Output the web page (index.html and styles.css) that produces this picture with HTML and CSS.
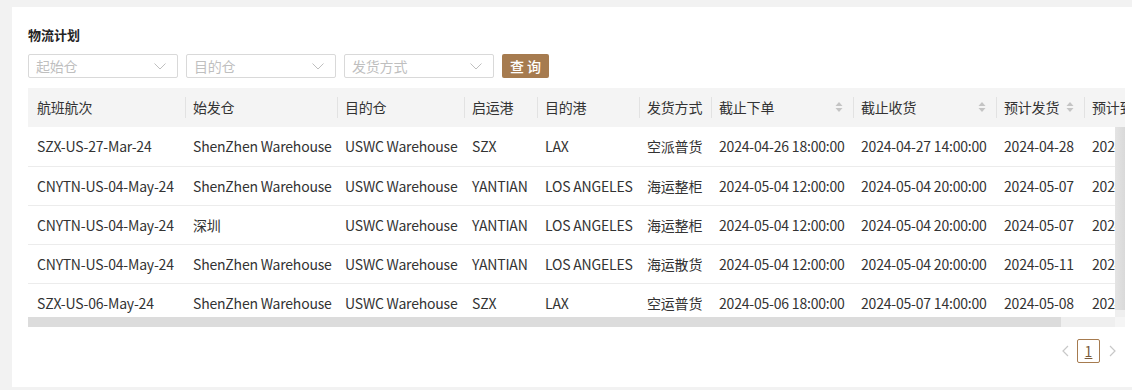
FILE: index.html
```html
<!DOCTYPE html>
<html lang="zh-CN">
<head>
<meta charset="utf-8">
<title>物流计划</title>
<link rel="stylesheet" href="styles.css">
</head>
<body>
<div class="card">
  <h2 class="title">物流计划</h2>
  <div class="filters">
    <div class="select"><span class="ph">起始仓</span><svg class="chev" viewBox="0 0 12 7" width="12" height="7"><path d="M0.5 0.5 L6 6 L11.5 0.5" fill="none" stroke="#bfbfbf" stroke-width="1"/></svg></div>
    <div class="select"><span class="ph">目的仓</span><svg class="chev" viewBox="0 0 12 7" width="12" height="7"><path d="M0.5 0.5 L6 6 L11.5 0.5" fill="none" stroke="#bfbfbf" stroke-width="1"/></svg></div>
    <div class="select"><span class="ph">发货方式</span><svg class="chev" viewBox="0 0 12 7" width="12" height="7"><path d="M0.5 0.5 L6 6 L11.5 0.5" fill="none" stroke="#bfbfbf" stroke-width="1"/></svg></div>
    <button class="btn">查 询</button>
  </div>

  <div class="table">
    <div class="thead-wrap">
      <table class="grid">
        <colgroup><col class="c1"><col class="c2"><col class="c3"><col class="c4"><col class="c5"><col class="c6"><col class="c7"><col class="c8"><col class="c9"><col class="c10"></colgroup>
        <thead>
          <tr>
            <th>航班航次</th>
            <th>始发仓</th>
            <th>目的仓</th>
            <th>启运港</th>
            <th>目的港</th>
            <th>发货方式</th>
            <th><div class="sortable"><span>截止下单</span><svg class="sort" viewBox="0 0 8 12" width="8" height="12"><path d="M4 1 L7.5 5 L0.5 5 Z M4 11 L7.5 7 L0.5 7 Z" fill="#c4c4c4"/></svg></div></th>
            <th><div class="sortable"><span>截止收货</span><svg class="sort" viewBox="0 0 8 12" width="8" height="12"><path d="M4 1 L7.5 5 L0.5 5 Z M4 11 L7.5 7 L0.5 7 Z" fill="#c4c4c4"/></svg></div></th>
            <th><div class="sortable"><span>预计发货</span><svg class="sort" viewBox="0 0 8 12" width="8" height="12"><path d="M4 1 L7.5 5 L0.5 5 Z M4 11 L7.5 7 L0.5 7 Z" fill="#c4c4c4"/></svg></div></th>
            <th><div class="sortable"><span>预计到货</span><svg class="sort" viewBox="0 0 8 12" width="8" height="12"><path d="M4 1 L7.5 5 L0.5 5 Z M4 11 L7.5 7 L0.5 7 Z" fill="#c4c4c4"/></svg></div></th>
          </tr>
        </thead>
      </table>
    </div>
    <div class="body-row">
      <div class="tbody-wrap">
        <table class="grid">
          <colgroup><col class="c1"><col class="c2"><col class="c3"><col class="c4"><col class="c5"><col class="c6"><col class="c7"><col class="c8"><col class="c9"><col class="c10"></colgroup>
          <tbody>
            <tr><td>SZX-US-27-Mar-24</td><td>ShenZhen Warehouse</td><td>USWC Warehouse</td><td>SZX</td><td>LAX</td><td>空派普货</td><td>2024-04-26 18:00:00</td><td>2024-04-27 14:00:00</td><td>2024-04-28</td><td>2024-05-06</td></tr>
            <tr><td>CNYTN-US-04-May-24</td><td>ShenZhen Warehouse</td><td>USWC Warehouse</td><td>YANTIAN</td><td>LOS ANGELES</td><td>海运整柜</td><td>2024-05-04 12:00:00</td><td>2024-05-04 20:00:00</td><td>2024-05-07</td><td>2024-05-25</td></tr>
            <tr><td>CNYTN-US-04-May-24</td><td>深圳</td><td>USWC Warehouse</td><td>YANTIAN</td><td>LOS ANGELES</td><td>海运整柜</td><td>2024-05-04 12:00:00</td><td>2024-05-04 20:00:00</td><td>2024-05-07</td><td>2024-05-25</td></tr>
            <tr><td>CNYTN-US-04-May-24</td><td>ShenZhen Warehouse</td><td>USWC Warehouse</td><td>YANTIAN</td><td>LOS ANGELES</td><td>海运散货</td><td>2024-05-04 12:00:00</td><td>2024-05-04 20:00:00</td><td>2024-05-11</td><td>2024-05-29</td></tr>
            <tr><td>SZX-US-06-May-24</td><td>ShenZhen Warehouse</td><td>USWC Warehouse</td><td>SZX</td><td>LAX</td><td>空运普货</td><td>2024-05-06 18:00:00</td><td>2024-05-07 14:00:00</td><td>2024-05-08</td><td>2024-05-16</td></tr>
          </tbody>
        </table>
      </div>
      <div class="vbar"><div class="vthumb"></div></div>
    </div>
    <div class="hbar-row">
      <div class="hbar"><div class="hthumb"></div></div>
      <div class="corner"></div>
    </div>
  </div>

  <div class="pager">
    <span class="pg-arrow"><svg viewBox="0 0 7 12" width="7" height="12"><path d="M6 1 L1 6 L6 11" fill="none" stroke="#c8c8c8" stroke-width="1.2"/></svg></span>
    <span class="pg-item">1</span>
    <span class="pg-arrow"><svg viewBox="0 0 7 12" width="7" height="12"><path d="M1 1 L6 6 L1 11" fill="none" stroke="#c8c8c8" stroke-width="1.2"/></svg></span>
  </div>
</div>
</body>
</html>
```
FILE: styles.css
```css
html, body {
  margin: 0;
  padding: 0;
  overflow: hidden;
}
body {
  background: #f2f2f2;
  font-family: "Noto Sans CJK SC", "Noto Sans", sans-serif;
  font-size: 14px;
  color: #333;
  height: 390px;
}
.card {
  background: #fff;
  margin: 7px 0 0 12px;
  width: 1097px;
  padding: 20px 16px 24px;
}
.title {
  margin: 0;
  font-size: 13px;
  line-height: 16px;
  font-weight: bold;
  color: #222;
}
.filters {
  margin-top: 11px;
  display: flex;
  gap: 8px;
  height: 24px;
}
.select {
  box-sizing: border-box;
  width: 150px;
  height: 24px;
  border: 1px solid #d9d9d9;
  border-radius: 2px;
  display: flex;
  align-items: center;
  justify-content: space-between;
  padding: 0 11px 0 7px;
}
.ph {
  color: #bfbfbf;
  font-size: 14px;
  line-height: 22px;
  letter-spacing: -0.2px;
}
.chev {
  display: block;
}
.btn {
  width: 47px;
  height: 24px;
  border: none;
  border-radius: 2px;
  background: #a67b4f;
  color: #fff;
  font-family: inherit;
  font-size: 14px;
  font-weight: 500;
  padding: 0;
  line-height: 24px;
}
.table {
  margin-top: 10px;
  width: 1097px;
}
.thead-wrap {
  overflow: hidden;
  width: 1097px;
  height: 39px;
  background: #f4f4f4;
}
.body-row {
  display: flex;
  height: 190px;
}
.tbody-wrap {
  width: 1087px;
  height: 190px;
  overflow: hidden;
}
.vbar {
  width: 10px;
  height: 190px;
  background: #efefef;
}
.vthumb {
  width: 10px;
  height: 183px;
  background: linear-gradient(to right, #e4e4e4, #d9d9d9);
}
.hbar-row {
  display: flex;
  height: 10px;
}
.hbar {
  width: 1087px;
  height: 10px;
  background: #efefef;
}
.hthumb {
  width: 1033px;
  height: 10px;
  background: #dcdcdc;
}
.corner {
  width: 10px;
  height: 10px;
  background: #f5f5f5;
}
.grid {
  table-layout: fixed;
  border-collapse: collapse;
  width: 1144px;
  letter-spacing: -0.2px;
}
.c1 { width: 157px; }
.c2 { width: 152px; }
.c3 { width: 127px; }
.c4 { width: 73px; }
.c5 { width: 102px; }
.c6 { width: 72px; }
.c7 { width: 142px; }
.c8 { width: 143px; }
.c9 { width: 88px; }
.c10 { width: 88px; }
.grid th {
  position: relative;
  height: 39px;
  box-sizing: border-box;
  padding: 0 8px;
  text-align: left;
  font-weight: normal;
  background: #f4f4f4;
  border-bottom: 1px solid #e8e8e8;
  white-space: nowrap;
  overflow: hidden;
  color: #333;
}
.grid th:first-child {
  padding-left: 9px;
}
.grid th + th::before {
  content: "";
  position: absolute;
  left: 0;
  top: 9px;
  width: 1px;
  height: 21px;
  background: #e2e2e2;
}
.sortable {
  display: flex;
  align-items: center;
  justify-content: space-between;
  padding-right: 2px;
}
.sort {
  display: block;
  flex: none;
}
.grid td {
  height: 39px;
  box-sizing: border-box;
  padding: 0 8px;
  border-bottom: 1px solid #ececec;
  white-space: nowrap;
  overflow: hidden;
  color: #333;
}
.grid td:first-child {
  padding-left: 9px;
}
.pager {
  margin-top: 12px;
  display: flex;
  justify-content: flex-end;
  align-items: center;
  height: 24px;
  padding-right: 3px;
}
.pg-arrow {
  width: 20px;
  height: 24px;
  display: flex;
  align-items: center;
  justify-content: center;
}
.pg-item {
  box-sizing: border-box;
  width: 23px;
  height: 24px;
  border: 1px solid #a67b4f;
  border-radius: 2px;
  margin: 0 2px;
  display: flex;
  align-items: center;
  justify-content: center;
  color: #7a5b3c;
  text-decoration: underline;
  font-size: 14px;
}
```
